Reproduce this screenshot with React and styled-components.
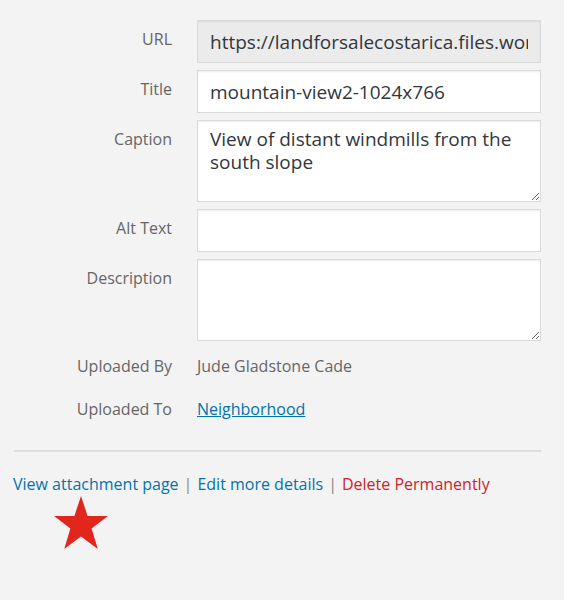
import React from 'react';
import styled, { createGlobalStyle } from 'styled-components';

const GlobalStyle = createGlobalStyle`
  html, body {
    margin: 0;
    padding: 0;
    background: #f3f3f3;
  }
  body {
    font-family: "Open Sans", "Noto Sans", sans-serif;
    font-size: 16px;
    color: #444;
  }
`;

const Panel = styled.div`
  width: 564px;
  height: 600px;
  box-sizing: border-box;
  padding: 20px 23px 0 14px;
  background: #f3f3f3;
`;

const Form = styled.div`
  display: grid;
  grid-template-columns: 158px 344px;
  column-gap: 25px;
  row-gap: 7px;
  align-items: start;
`;

const Label = styled.label`
  text-align: right;
  color: #666;
  font-size: 16px;
  line-height: 22px;
  padding-top: ${(p) => (p.$plain ? '0' : '8px')};
`;

const Field = styled.input`
  box-sizing: border-box;
  width: 344px;
  height: 43px;
  margin: 0;
  padding: 0 12px;
  border: 1px solid #dadada;
  border-radius: 0;
  background: ${(p) => (p.readOnly ? '#ebebeb' : '#fff')};
  box-shadow: inset 0 1px 2px rgba(0, 0, 0, 0.07);
  font-family: "Open Sans", "Noto Sans", sans-serif;
  font-size: 19px;
  color: #32373c;
  outline: none;
`;

const Area = styled.textarea`
  box-sizing: border-box;
  width: 344px;
  height: 82px;
  margin: 0;
  padding: 7px 12px;
  border: 1px solid #dadada;
  border-radius: 0;
  background: #fff;
  box-shadow: inset 0 1px 2px rgba(0, 0, 0, 0.07);
  font-family: "Open Sans", "Noto Sans", sans-serif;
  font-size: 19px;
  line-height: 23px;
  color: #32373c;
  outline: none;
  display: block;
`;

const Meta = styled.div`
  display: grid;
  grid-template-columns: 158px 344px;
  column-gap: 25px;
  row-gap: 21px;
  margin-top: 14px;
`;

const Value = styled.div`
  color: #666;
  font-size: 16px;
  line-height: 22px;
`;

const Link = styled.a`
  color: ${(p) => (p.$danger ? '#c9252c' : '#0073aa')};
  text-decoration: ${(p) => (p.$underline ? 'underline' : 'none')};
  cursor: pointer;
`;

const Divider = styled.hr`
  margin: 30px 0 0 0;
  border: 0;
  border-top: 2px solid #dedede;
  width: 527px;
`;

const Actions = styled.div`
  margin-top: 21px;
  font-size: 16px;
  line-height: 22px;
  display: flex;
  gap: 5px;
  margin-left: -1px;
`;

const Sep = styled.span`
  color: #888;
`;

const Star = styled.svg`
  display: block;
  margin: 1px 0 0 39px;
`;

export default function App() {
  return (
    <Panel>
      <GlobalStyle />
      <Form>
        <Label>URL</Label>
        <Field readOnly value="https://landforsalecostarica.files.wordpress.com/2015/06/mountain-view2-1024x766.jpg" />
        <Label>Title</Label>
        <Field defaultValue="mountain-view2-1024x766" />
        <Label>Caption</Label>
        <Area defaultValue="View of distant windmills from the south slope" />
        <Label>Alt Text</Label>
        <Field defaultValue="" />
        <Label>Description</Label>
        <Area defaultValue="" />
      </Form>
      <Meta>
        <Label $plain>Uploaded By</Label>
        <Value>Jude Gladstone Cade</Value>
        <Label $plain>Uploaded To</Label>
        <Value>
          <Link $underline>Neighborhood</Link>
        </Value>
      </Meta>
      <Divider />
      <Actions>
        <Link>View attachment page</Link>
        <Sep>|</Sep>
        <Link>Edit more details</Link>
        <Sep>|</Sep>
        <Link $danger>Delete Permanently</Link>
      </Actions>
      <Star width="56" height="54" viewBox="0 0 56 54">
        <polygon
          points="28,0 34.6,20 55,20 38.6,32.4 44.8,53 28,40.6 11.2,53 17.4,32.4 1,20 21.4,20"
          fill="#e1261c"
        />
      </Star>
    </Panel>
  );
}
